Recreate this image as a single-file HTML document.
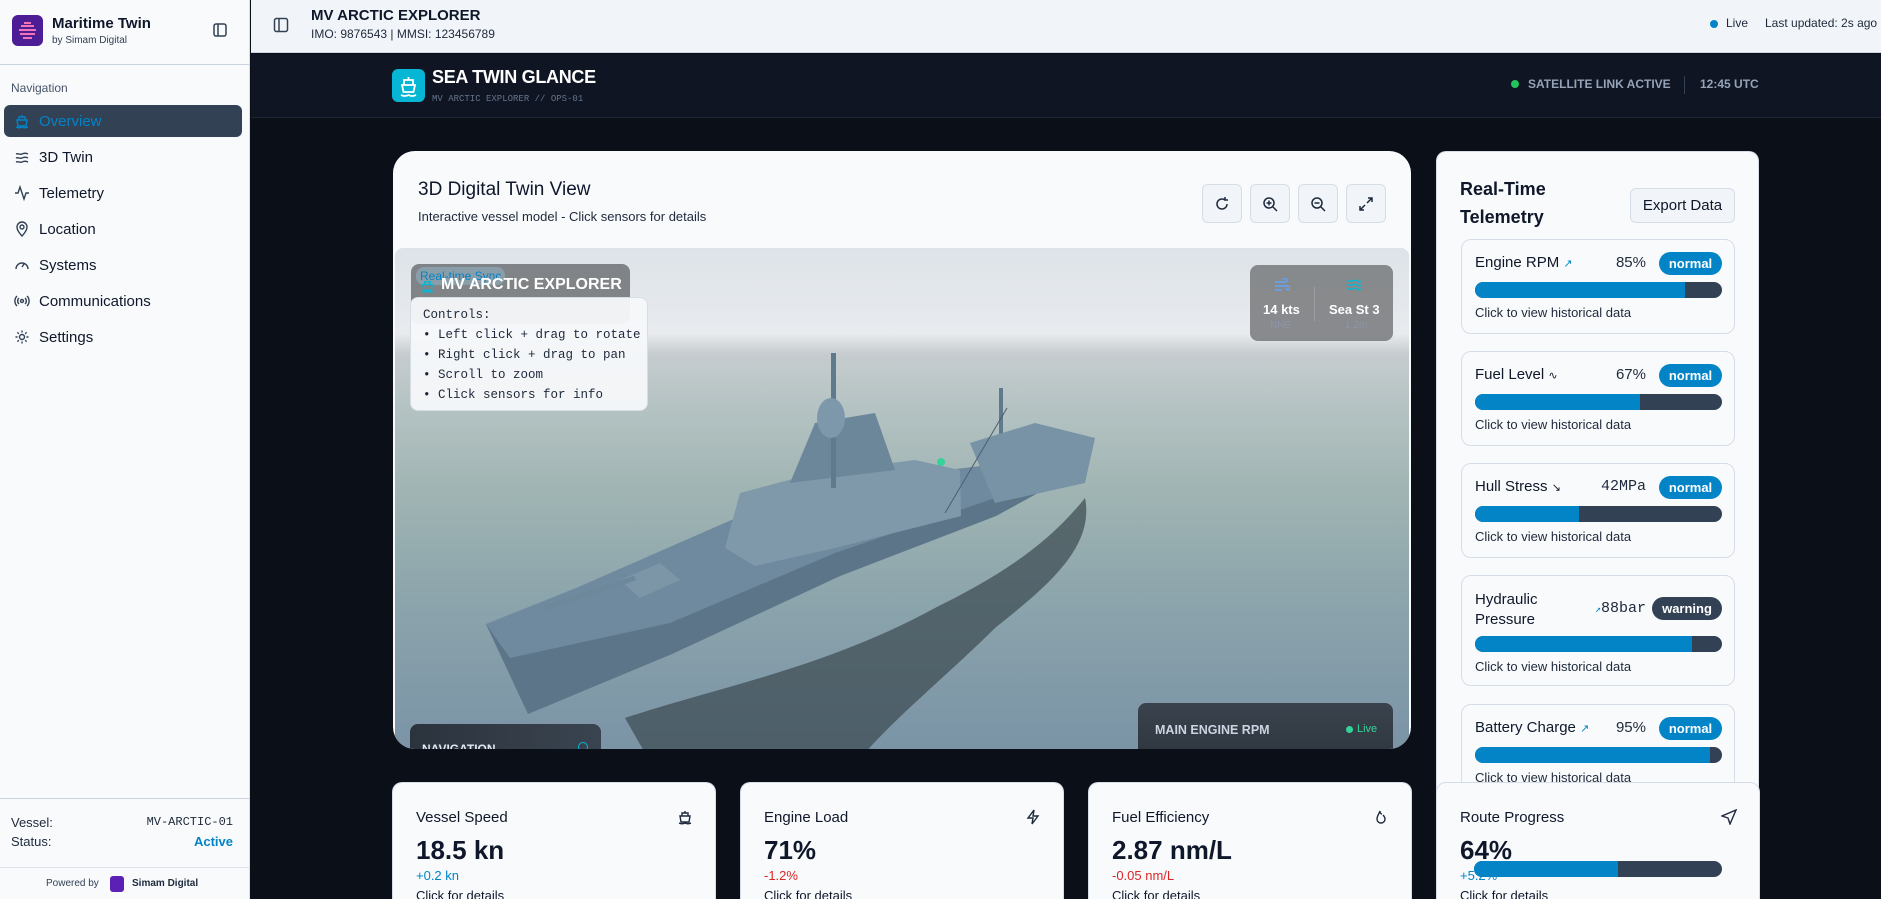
<!DOCTYPE html>
<html><head><meta charset="utf-8"><style>
*{box-sizing:border-box;margin:0;padding:0}
html{width:1881px;height:899px;overflow:hidden}
body{width:1881px;height:899px;overflow:hidden;font-family:"Liberation Sans",sans-serif;background:#0b0f17;position:relative;color:#0f172a}
.abs{position:absolute}
.mono{font-family:"Liberation Mono",monospace}
.side{left:0;top:0;width:250px;height:899px;background:#f8fafc;border-right:1px solid #d8dee6}
.nav{position:absolute;left:4px;width:238px;height:32px;display:flex;align-items:center;font-size:15px;color:#0f172a}
.nav svg{position:absolute;left:10px}
.nav span{position:absolute;left:35px}
.btn{position:absolute;top:184px;width:40px;height:39px;border:1px solid #d5dde7;border-radius:6px;background:#f1f5f9;display:flex;align-items:center;justify-content:center}
.ti{position:absolute;left:1461px;width:274px;border:1px solid #d5dde7;border-radius:10px;background:#f8fafc}
.ti .lb{position:absolute;left:13px;font-size:15px}
.ti .v{position:absolute;font-size:15px;color:#1e293b}
.pill{position:absolute;right:12px;height:23px;border-radius:12px;background:#0284c7;color:#fff;font-weight:bold;font-size:13px;line-height:23px;text-align:center;width:63px}
.bar{position:absolute;left:13px;right:12px;height:16px;border-radius:8px;background:#334155;overflow:hidden}
.bar i{display:block;height:100%;background:#0284c7}
.ti .h{position:absolute;left:13px;font-size:13px;color:#1e293b}
.sc{position:absolute;top:782px;width:324px;height:117px;background:#f8fafc;border-radius:10px 10px 0 0;border:1px solid #d5dde7;border-bottom:none;overflow:hidden}
.sc .t{position:absolute;left:23px;top:26px;font-size:15px}
.sc .val{position:absolute;left:23px;top:52px;font-size:26px;font-weight:bold}
.sc .d{position:absolute;left:23px;top:85px;font-size:13px}
.sc .c{position:absolute;left:23px;top:105px;font-size:13px}
.sc svg{position:absolute;right:22px;top:26px}
</style></head><body>

<div class="abs side">
  <div class="abs" style="left:12px;top:15px;width:31px;height:31px;border-radius:6px;background:#4c1d95">
    <svg width="31" height="31" viewBox="0 0 31 31"><g stroke="#f472b6" stroke-width="2" fill="none"><path d="M9 11h13M7 15h17M8 19h15M11 23h9M12 8h7"/></g></svg>
  </div>
  <div class="abs" style="left:52px;top:15px;font-size:15px;font-weight:bold;">Maritime Twin</div>
  <div class="abs" style="left:52px;top:35px;font-size:10px;color:#334155">by Simam Digital</div>
  <svg class="abs" style="left:213px;top:23px" width="14" height="14" viewBox="0 0 14 14"><rect x="1" y="1" width="12" height="12" rx="2" fill="none" stroke="#334155" stroke-width="1.5"/><path d="M5 1v12" stroke="#334155" stroke-width="1.5"/></svg>
  <div class="abs" style="left:0;top:64px;width:250px;border-top:1px solid #cbd5e1"></div>
  <div class="abs" style="left:11px;top:81px;font-size:12px;color:#475569">Navigation</div>
  <div class="nav" style="top:105px;background:#334155;border-radius:6px;color:#0284c7"><svg width="16" height="16" viewBox="0 0 16 16" fill="none" stroke="#0284c7" stroke-width="1.4"><path d="M3 7h10l-1 6H4z M5 7V4h6v3 M8 2v2 M2 14c2 1 4 1 6 0 2 1 4 1 6 0"/></svg><span>Overview</span></div>
  <div class="nav" style="top:141px"><svg width="16" height="16" viewBox="0 0 16 16" fill="none" stroke="#334155" stroke-width="1.4"><path d="M2 5c2-1 4 1 6 0s4-1 6 0M2 9c2-1 4 1 6 0s4-1 6 0M2 13c2-1 4 1 6 0s4-1 6 0"/></svg><span>3D Twin</span></div>
  <div class="nav" style="top:177px"><svg width="16" height="16" viewBox="0 0 16 16" fill="none" stroke="#334155" stroke-width="1.4"><path d="M1 8h3l2-6 4 12 2-6h3"/></svg><span>Telemetry</span></div>
  <div class="nav" style="top:213px"><svg width="16" height="16" viewBox="0 0 16 16" fill="none" stroke="#334155" stroke-width="1.4"><path d="M8 15s5-5 5-9A5 5 0 0 0 3 6c0 4 5 9 5 9z"/><circle cx="8" cy="6" r="2"/></svg><span>Location</span></div>
  <div class="nav" style="top:249px"><svg width="16" height="16" viewBox="0 0 16 16" fill="none" stroke="#334155" stroke-width="1.4"><path d="M2 12a6 6 0 1 1 12 0M8 10l2-3"/></svg><span>Systems</span></div>
  <div class="nav" style="top:285px"><svg width="16" height="16" viewBox="0 0 16 16" fill="none" stroke="#334155" stroke-width="1.4"><circle cx="8" cy="8" r="1.5"/><path d="M5 5a4 4 0 0 0 0 6M11 5a4 4 0 0 1 0 6M3 3a7 7 0 0 0 0 10M13 3a7 7 0 0 1 0 10"/></svg><span>Communications</span></div>
  <div class="nav" style="top:321px"><svg width="16" height="16" viewBox="0 0 16 16" fill="none" stroke="#334155" stroke-width="1.4"><circle cx="8" cy="8" r="2.5"/><path d="M8 1.5v2M8 12.5v2M1.5 8h2M12.5 8h2M3.4 3.4l1.4 1.4M11.2 11.2l1.4 1.4M3.4 12.6l1.4-1.4M11.2 4.8l1.4-1.4"/></svg><span>Settings</span></div>
  <div class="abs" style="left:0;top:798px;width:250px;border-top:1px solid #cbd5e1"></div>
  <div class="abs" style="left:11px;top:815px;font-size:13px;color:#1e293b">Vessel:</div>
  <div class="abs mono" style="right:16px;top:815px;font-size:12px;color:#1e293b">MV-ARCTIC-01</div>
  <div class="abs" style="left:11px;top:834px;font-size:13px;color:#1e293b">Status:</div>
  <div class="abs" style="right:16px;top:834px;font-size:13px;color:#0284c7;font-weight:bold">Active</div>
  <div class="abs" style="left:0;top:867px;width:250px;border-top:1px solid #dde3ea"></div>
  <div class="abs" style="left:46px;top:878px;font-size:10px;color:#334155">Powered by</div>
  <div class="abs" style="left:110px;top:876px;width:14px;height:16px;border-radius:3px;background:#5b21b6"></div>
  <div class="abs" style="left:132px;top:878px;font-size:10px;font-weight:bold;color:#1e293b">Simam Digital</div>
</div>

<div class="abs" style="left:251px;top:0;width:1630px;height:53px;background:#f1f5f9;border-bottom:1px solid #cbd5e1"></div>
<svg class="abs" style="left:273px;top:17px" width="16" height="16" viewBox="0 0 16 16"><rect x="1.5" y="1.5" width="13" height="13" rx="2" fill="none" stroke="#334155" stroke-width="1.5"/><path d="M6 1.5v13" stroke="#334155" stroke-width="1.5"/></svg>
<div class="abs" style="left:311px;top:7px;font-size:15px;font-weight:bold">MV ARCTIC EXPLORER</div>
<div class="abs" style="left:311px;top:27px;font-size:12px;color:#1e293b">IMO: 9876543 | MMSI: 123456789</div>
<div class="abs" style="left:1710px;top:20px;width:8px;height:8px;border-radius:50%;background:#0284c7"></div>
<div class="abs" style="left:1726px;top:16px;font-size:12px;color:#1e293b">Live</div>
<div class="abs" style="left:1765px;top:16px;font-size:12px;color:#1e293b;white-space:nowrap">Last updated: 2s ago</div>

<div class="abs" style="left:251px;top:54px;width:1630px;height:64px;background:#0f1522;border-bottom:1px solid #1e2633"></div>
<div class="abs" style="left:392px;top:69px;width:33px;height:33px;border-radius:6px;background:#06b6d4"><svg width="33" height="33" viewBox="0 0 33 33" fill="none" stroke="#fff" stroke-width="1.8"><path d="M10 16h13l-1.5 7h-10z M12 16v-5h9v5 M16.5 8v3 M9 26c2.5 1.3 5 1.3 7.5 0 2.5 1.3 5 1.3 7.5 0"/></svg></div>
<div class="abs" style="left:432px;top:67px;font-size:18px;font-weight:bold;color:#fff;letter-spacing:-0.3px">SEA TWIN GLANCE</div>
<div class="abs mono" style="left:432px;top:94px;font-size:9px;color:#64748b">MV ARCTIC EXPLORER // OPS-01</div>
<div class="abs" style="left:1511px;top:80px;width:8px;height:8px;border-radius:50%;background:#22c55e"></div>
<div class="abs" style="left:1528px;top:77px;font-size:12px;font-weight:bold;color:#94a3b8">SATELLITE LINK ACTIVE</div>
<div class="abs" style="left:1684px;top:76px;height:18px;border-left:1px solid #334155"></div>
<div class="abs" style="left:1700px;top:77px;font-size:12px;font-weight:bold;color:#94a3b8">12:45 UTC</div>

<div class="abs" style="left:393px;top:151px;width:1018px;height:598px;background:#f8fafc;border-radius:22px;overflow:hidden">
  <div class="abs" style="left:25px;top:28px;font-size:19px;font-weight:500">3D Digital Twin View</div>
  <div class="abs" style="left:25px;top:58px;font-size:13px;color:#1e293b">Interactive vessel model - Click sensors for details</div>
  <div class="abs" style="left:2px;top:97px;width:1014px;height:505px;border-radius:8px 8px 0 0;overflow:hidden;background:linear-gradient(180deg,#dde3e9 0%,#e8ebee 17%,#c6cccf 21%,#b4c2c2 32%,#a0b5b3 48%,#8da5ac 68%,#7a93a6 100%)">
    <svg class="abs" style="left:0;top:0" width="1014" height="505" viewBox="0 0 1014 505">
      <path d="M230 470 C320 440 430 420 540 360 C600 330 650 300 690 250 C700 300 650 340 600 380 C560 420 500 470 470 505 L250 505 Z" fill="#3a4850" opacity="0.7"/>
      <path d="M91 376 L181 340 L277 298 L373 256 L517 226 L691 206 L685 222 L601 268 L445 328 L277 406 L133 466 Z" fill="#6f8a9e"/>
      <path d="M91 376 L133 466 L277 406 L445 328 L601 268 L685 222 L691 206 L600 250 L440 305 L275 375 L115 410 Z" fill="#5c7588"/>
      <path d="M330 300 L345 245 L420 225 L520 212 L565 222 L566 268 L440 300 L360 318 Z" fill="#7f99ab"/>
      <path d="M395 235 L420 175 L480 165 L500 222 Z" fill="#6d879a"/>
      <rect x="436" y="105" width="5" height="135" fill="#5f7a8c"/>
      <ellipse cx="436" cy="170" rx="14" ry="20" fill="#7d98aa"/>
      <rect x="604" y="140" width="4" height="80" fill="#5f7a8c"/>
      <path d="M575 195 L640 175 L700 190 L690 235 L600 255 Z" fill="#7893a6"/>
      <path d="M225 332 L265 315 L285 332 L245 350 Z" fill="#7c96a8"/>
      <path d="M150 360 L240 330" stroke="#6d889b" stroke-width="5"/>
      <path d="M550 265 L612 160" stroke="#4a5f6e" stroke-width="1"/>
      <circle cx="546" cy="214" r="4" fill="#34d399"/>
    </svg>
    <div class="abs" style="left:16px;top:16px;width:219px;height:60px;background:rgba(110,114,118,0.85);border-radius:8px"></div>
    <div class="abs" style="left:21px;top:19px;font-size:12px;color:#0284c7;background:rgba(150,190,210,0.45);padding:2px 4px;border-radius:8px">Real-time Sync</div>
    <div class="abs" style="left:46px;top:28px;font-size:16px;font-weight:bold;color:#fff">MV ARCTIC EXPLORER</div>
    <svg class="abs" style="left:25px;top:30px" width="15" height="15" viewBox="0 0 16 16" fill="none" stroke="#06b6d4" stroke-width="1.4"><path d="M3 7h10l-1 6H4z M5 7V4h6v3 M2 14c2 1 4 1 6 0 2 1 4 1 6 0"/></svg>
    <div class="abs mono" style="left:15px;top:49px;width:238px;height:114px;background:rgba(246,248,250,0.95);border:1px solid #d5dde7;border-radius:8px;padding:7px 12px;font-size:12.5px;line-height:20px;color:#1e293b;white-space:pre">Controls:
• Left click + drag to rotate
• Right click + drag to pan
• Scroll to zoom
• Click sensors for info</div>
    <div class="abs" style="left:855px;top:17px;width:143px;height:76px;background:rgba(125,127,130,0.9);border-radius:8px;color:#fff">
      <svg class="abs" style="left:24px;top:13px" width="16" height="14" viewBox="0 0 16 14" fill="none" stroke="#60a5fa" stroke-width="1.4"><path d="M1 4h10a2 2 0 1 0-2-2M1 8h13a2 2 0 1 1-2 2M1 12h7"/></svg>
      <svg class="abs" style="left:96px;top:13px" width="16" height="14" viewBox="0 0 16 14" fill="none" stroke="#06b6d4" stroke-width="1.4"><path d="M1 3c2-1 3 1 5 0s4-1 5 0 3 1 4 0M1 7c2-1 3 1 5 0s4-1 5 0 3 1 4 0M1 11c2-1 3 1 5 0s4-1 5 0 3 1 4 0"/></svg>
      <div class="abs" style="left:13px;top:37px;font-size:13px;font-weight:bold">14 kts</div>
      <div class="abs" style="left:20px;top:55px;font-size:10px;color:#8b97a8">NNE</div>
      <div class="abs" style="left:64px;top:22px;height:34px;border-left:1px solid #9aa0a6"></div>
      <div class="abs" style="left:79px;top:37px;font-size:13px;font-weight:bold">Sea St 3</div>
      <div class="abs" style="left:95px;top:55px;font-size:10px;color:#8b97a8">1.2m</div>
    </div>
    <div class="abs" style="left:15px;top:476px;width:191px;height:40px;background:linear-gradient(90deg,#2b333d,#3a4450);border-radius:8px"></div>
    <div class="abs" style="left:27px;top:494px;font-size:12px;font-weight:bold;color:#e2e8f0">NAVIGATION</div>
    <div class="abs" style="left:183px;top:494px;width:10px;height:10px;border:1.5px solid #06b6d4;border-radius:50%"></div>
    <div class="abs" style="left:743px;top:455px;width:255px;height:60px;background:linear-gradient(180deg,#3a434d,#2d353e);border-radius:8px"></div>
    <div class="abs" style="left:760px;top:475px;font-size:12.5px;font-weight:bold;color:#cbd5e1">MAIN ENGINE RPM</div>
    <div class="abs" style="left:951px;top:478px;width:7px;height:7px;border-radius:50%;background:#34d399"></div>
    <div class="abs" style="left:962px;top:475px;font-size:11px;color:#34d399">Live</div>
  </div>
  <div class="btn" style="left:809px;top:33px"><svg width="16" height="16" viewBox="0 0 16 16" fill="none" stroke="#1e293b" stroke-width="1.5"><path d="M13 8a5 5 0 1 1-2-4M11 1v3h3"/></svg></div>
  <div class="btn" style="left:857px;top:33px"><svg width="16" height="16" viewBox="0 0 16 16" fill="none" stroke="#1e293b" stroke-width="1.5"><circle cx="7" cy="7" r="5"/><path d="M11 11l4 4M7 4.5v5M4.5 7h5"/></svg></div>
  <div class="btn" style="left:905px;top:33px"><svg width="16" height="16" viewBox="0 0 16 16" fill="none" stroke="#1e293b" stroke-width="1.5"><circle cx="7" cy="7" r="5"/><path d="M11 11l4 4M4.5 7h5"/></svg></div>
  <div class="btn" style="left:953px;top:33px"><svg width="16" height="16" viewBox="0 0 16 16" fill="none" stroke="#1e293b" stroke-width="1.5"><path d="M10 2h4v4M14 2L9 7M6 14H2v-4M2 14l5-5"/></svg></div>
</div>

<div class="abs" style="left:1436px;top:151px;width:323px;height:748px;background:#f8fafc;border-radius:10px 10px 0 0;border:1px solid #d5dde7;border-bottom:none"></div>
<div class="abs" style="left:1460px;top:175px;font-size:18px;font-weight:bold;line-height:28px">Real-Time<br>Telemetry</div>
<div class="abs" style="left:1630px;top:188px;width:105px;height:35px;border:1px solid #d5dde7;border-radius:6px;background:#f1f5f9;font-size:15px;text-align:center;line-height:33px">Export Data</div>

<div class="ti" style="top:239px;height:95px"><div class="lb" style="top:14px">Engine RPM <span style="color:#0284c7;font-size:11px">↗</span></div><div class="v" style="right:88px;top:14px">85%</div><div class="pill" style="top:12px">normal</div><div class="bar" style="top:42px"><i style="width:85%"></i></div><div class="h" style="top:65px">Click to view historical data</div></div>
<div class="ti" style="top:351px;height:95px"><div class="lb" style="top:14px">Fuel Level <span style="font-size:11px">∿</span></div><div class="v" style="right:88px;top:14px">67%</div><div class="pill" style="top:12px">normal</div><div class="bar" style="top:42px"><i style="width:67%"></i></div><div class="h" style="top:65px">Click to view historical data</div></div>
<div class="ti" style="top:463px;height:95px"><div class="lb" style="top:14px">Hull Stress <span style="font-size:11px">↘</span></div><div class="v mono" style="right:88px;top:14px">42MPa</div><div class="pill" style="top:12px">normal</div><div class="bar" style="top:42px"><i style="width:42%"></i></div><div class="h" style="top:65px">Click to view historical data</div></div>
<div class="ti" style="top:575px;height:111px"><div class="lb" style="top:14px;line-height:20px">Hydraulic<br>Pressure</div><div class="v mono" style="right:88px;top:24px"><span style="color:#0284c7;font-size:10px">↗</span>88bar</div><div class="pill" style="top:21px;background:#334155;width:70px">warning</div><div class="bar" style="top:60px"><i style="width:88%"></i></div><div class="h" style="top:83px">Click to view historical data</div></div>
<div class="ti" style="top:704px;height:120px"><div class="lb" style="top:14px">Battery Charge <span style="color:#0284c7;font-size:11px">↗</span></div><div class="v" style="right:88px;top:14px">95%</div><div class="pill" style="top:12px">normal</div><div class="bar" style="top:42px"><i style="width:95%"></i></div><div class="h" style="top:65px">Click to view historical data</div></div>

<div class="sc" style="left:392px"><div class="t">Vessel Speed</div><svg width="16" height="16" viewBox="0 0 16 16" fill="none" stroke="#1e293b" stroke-width="1.4"><path d="M3 7h10l-1 6H4z M5 7V4h6v3 M8 2v2 M2 14c2 1 4 1 6 0 2 1 4 1 6 0"/></svg><div class="val">18.5 kn</div><div class="d" style="color:#0284c7">+0.2 kn</div><div class="c">Click for details</div></div>
<div class="sc" style="left:740px"><div class="t">Engine Load</div><svg width="16" height="16" viewBox="0 0 16 16" fill="none" stroke="#1e293b" stroke-width="1.4"><path d="M9 1L3 9h5l-1 6 6-8H8z"/></svg><div class="val">71%</div><div class="d" style="color:#dc2626">-1.2%</div><div class="c">Click for details</div></div>
<div class="sc" style="left:1088px"><div class="t">Fuel Efficiency</div><svg width="16" height="16" viewBox="0 0 16 16" fill="none" stroke="#1e293b" stroke-width="1.4"><path d="M7 2c-1 3-3 5-3 8a4 4 0 0 0 8 0c0-2-1-3-2-4M7 2c0 2 1 3 2 3"/></svg><div class="val">2.87 nm/L</div><div class="d" style="color:#dc2626">-0.05 nm/L</div><div class="c">Click for details</div></div>
<div class="sc" style="left:1436px"><div class="t">Route Progress</div><svg width="16" height="16" viewBox="0 0 16 16" fill="none" stroke="#1e293b" stroke-width="1.4"><path d="M15 1L1 7l6 2 2 6z"/></svg><div class="val">64%</div><div class="d" style="color:#0284c7">+5.2%</div><div class="bar" style="top:78px;left:37px;right:37px"><i style="width:58%"></i></div><div class="c">Click for details</div></div>

</body></html>
